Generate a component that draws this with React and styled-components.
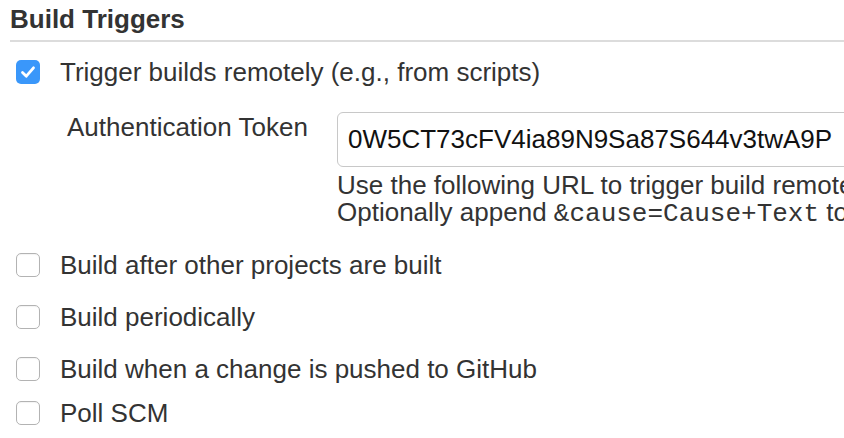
import React from "react";
import styled, { createGlobalStyle } from "styled-components";

const Global = createGlobalStyle`
  html, body { margin: 0; padding: 0; background: #fff; overflow: hidden; }
  body { font-family: "Liberation Sans", Arial, Helvetica, sans-serif; color: #333; }
`;

const Page = styled.div`
  width: 844px;
  height: 438px;
  overflow: hidden;
  padding: 4px 0 0 10px;
  box-sizing: border-box;
`;

const Heading = styled.h2`
  margin: 0;
  font-size: 26px;
  line-height: 30px;
  font-weight: bold;
  color: #333;
  padding: 0 0 6px 0;
  border-bottom: 2px solid #dcdcdc;
`;

const Row = styled.label`
  display: flex;
  align-items: center;
  gap: 20px;
  margin-top: ${(p) => p.$mt}px;
  margin-left: 6px;
  font-size: 26px;
  line-height: 30px;
  white-space: nowrap;
`;

const Box = styled.span`
  flex: none;
  width: 24px;
  height: 24px;
  box-sizing: border-box;
  border-radius: 5px;
  display: flex;
  align-items: center;
  justify-content: center;
  background: ${(p) => (p.$checked ? "#3a97fa" : "#fff")};
  border: ${(p) => (p.$checked ? "none" : "1px solid #b3b3b3")};
  box-shadow: ${(p) => (p.$checked ? "none" : "inset 0 1px 1px rgba(0,0,0,0.05)")};
`;

const Detail = styled.div`
  display: grid;
  grid-template-columns: 270px auto;
  align-items: start;
  margin-top: 25px;
  margin-left: 57px;
  font-size: 26px;
  line-height: 30px;
`;

const FieldLabel = styled.div``;

const Field = styled.div`
  display: flex;
  flex-direction: column;
`;

const TokenInput = styled.div`
  width: 600px;
  height: 55px;
  box-sizing: border-box;
  border: 1px solid #c8c8c8;
  border-radius: 6px;
  padding: 11px 10px 0 10px;
  font-size: 26px;
  line-height: 30px;
  color: #111;
`;

const HelpBlock = styled.div`
  margin-top: 5px;
  font-size: 26px;
  line-height: 27px;
  white-space: nowrap;
`;

const HelpLine = styled.div``;

const Code = styled.code`
  font-family: "Liberation Mono", "Courier New", monospace;
  font-size: 26px;
  line-height: 27px;
`;

function Check({ checked }) {
  return (
    <Box $checked={checked}>
      {checked && (
        <svg width="16" height="14" viewBox="0 0 16 14">
          <path d="M2.5 7.5 L6.3 11.2 L13.5 2.8" fill="none" stroke="#fff" strokeWidth="2.8" strokeLinecap="round" strokeLinejoin="round" />
        </svg>
      )}
    </Box>
  );
}

export default function App() {
  return (
    <Page>
      <Global />
      <Heading>Build Triggers</Heading>
      <Row $mt={15}>
        <Check checked />
        Trigger builds remotely (e.g., from scripts)
      </Row>
      <Detail>
        <FieldLabel>Authentication Token</FieldLabel>
        <Field>
          <TokenInput>0W5CT73cFV4ia89N9Sa87S644v3twA9P</TokenInput>
          <HelpBlock>
            <HelpLine>Use the following URL to trigger build remotely</HelpLine>
            <HelpLine>
              Optionally append <Code>&amp;cause=Cause+Text</Code> to
            </HelpLine>
          </HelpBlock>
        </Field>
      </Detail>
      <Row $mt={22}>
        <Check />
        Build after other projects are built
      </Row>
      <Row $mt={22}>
        <Check />
        Build periodically
      </Row>
      <Row $mt={22}>
        <Check />
        Build when a change is pushed to GitHub
      </Row>
      <Row $mt={14}>
        <Check />
        Poll SCM
      </Row>
    </Page>
  );
}
